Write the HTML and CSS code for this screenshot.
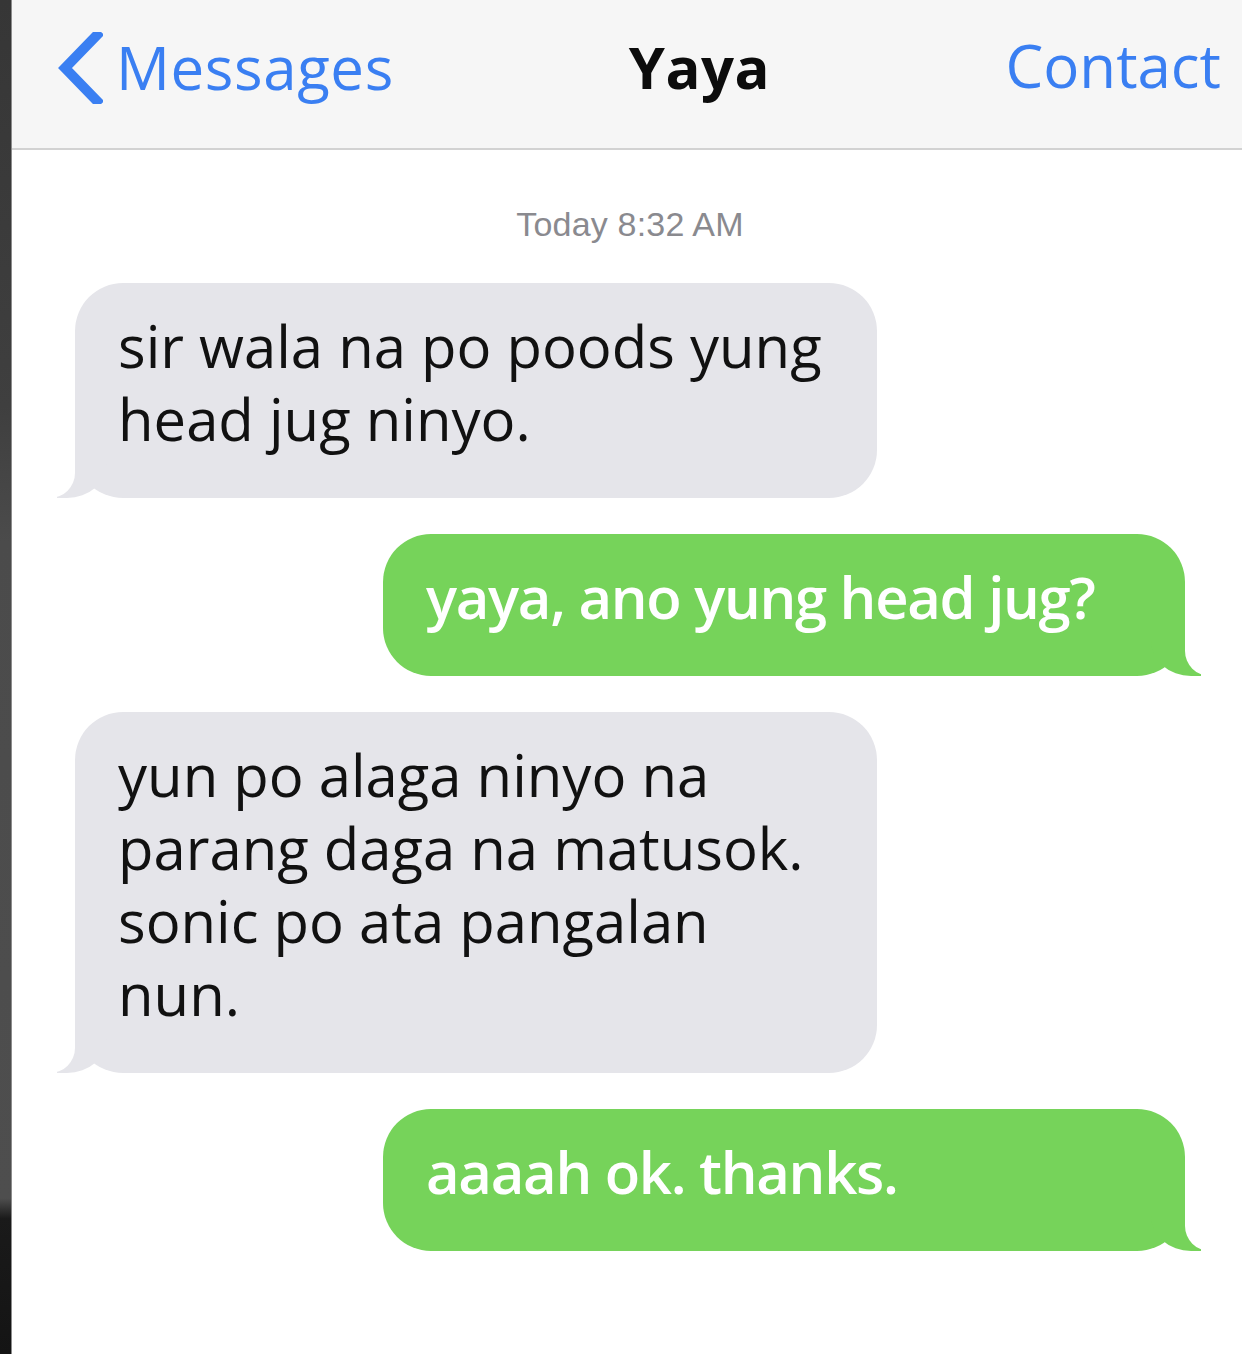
FILE: index.html
```
<!DOCTYPE html>
<html lang="tl">
<head>
<meta charset="utf-8">
<title>Yaya</title>
<link rel="stylesheet" href="styles.css">
</head>
<body>
<div class="device">
  <div class="bezel"></div>
  <div class="screen">
    <header class="navbar">
      <a class="back" href="#">
        <svg class="chevron" width="46" height="72" viewBox="0 0 46 72" aria-hidden="true">
          <polyline points="40,3 8,36 40,69" fill="none" stroke="#3a7ff2" stroke-width="10" stroke-linecap="square" stroke-linejoin="miter"/>
        </svg>
        <span>Messages</span>
      </a>
      <h1 class="title">Yaya</h1>
      <a class="contact" href="#">Contact</a>
    </header>
    <main class="thread">
      <div class="timestamp">Today 8:32 AM</div>
      <p class="bubble them">sir wala na po poods yung<br>head jug ninyo.</p>
      <p class="bubble me">yaya, ano yung head jug?</p>
      <p class="bubble them">yun po alaga ninyo na<br>parang daga na matusok.<br>sonic po ata pangalan<br>nun.</p>
      <p class="bubble me">aaaah ok. thanks.</p>
    </main>
  </div>
</div>
</body>
</html>
```
FILE: styles.css
```
* { box-sizing: border-box; }

html, body {
  margin: 0;
  padding: 0;
  background: #ffffff;
}

body {
  font-family: "Open Sans", "Noto Sans", sans-serif;
  overflow: hidden;
}

.device {
  display: flex;
  width: 1242px;
  height: 1354px;
}

.bezel {
  width: 12px;
  flex: 0 0 12px;
  background: linear-gradient(to bottom, #363636 0%, #3f3f3f 30%, #4b4b4b 40%, #4e4e4e 88.5%, #1a1a1a 90%, #141414 100%);
  border-right: 1px solid #8c8c8c;
}

.screen {
  flex: 1;
  display: flex;
  flex-direction: column;
  background: #ffffff;
  overflow: hidden;
}

.navbar {
  height: 150px;
  flex: 0 0 150px;
  display: flex;
  align-items: center;
  padding: 0 21px 14px 45px;
  background: #f6f6f6;
  border-bottom: 2px solid #d2d2d2;
}

.back {
  display: flex;
  align-items: center;
  gap: 13px;
  color: #3a7ff2;
  text-decoration: none;
  font-size: 60px;
  line-height: 1;
  letter-spacing: 0.6px;
}

.chevron {
  display: block;
  margin-top: 2px;
}

.title {
  margin: 0 0 0 235px;
  font-size: 58px;
  font-weight: 700;
  line-height: 1;
  color: #0c0c0c;
  letter-spacing: 0.5px;
}

.contact {
  margin-left: auto;
  color: #3a7ff2;
  text-decoration: none;
  font-size: 60px;
  line-height: 1;
  margin-top: -4px;
}

.thread {
  display: flex;
  flex-direction: column;
  gap: 36px;
  padding: 0 57px 0 63px;
}

.timestamp {
  align-self: center;
  margin: 57px 0 6px;
  font-family: "Liberation Sans", Arial, sans-serif;
  font-size: 34px;
  line-height: 1;
  letter-spacing: 0.2px;
  color: #8a8a8f;
}

.bubble {
  position: relative;
  width: 802px;
  margin: 0;
  padding: 26px 30px 43px 43px;
  border-radius: 48px;
  font-size: 58px;
  line-height: 73px;
}

.bubble::before,
.bubble::after {
  content: "";
  position: absolute;
  bottom: 0;
  height: 60px;
}

.them {
  align-self: flex-start;
  background: #e5e5ea;
  color: #111111;
}

.them::before {
  left: -18px;
  width: 50px;
  background: #e5e5ea;
  border-bottom-right-radius: 40px 35px;
}

.them::after {
  left: -60px;
  width: 60px;
  background: #ffffff;
  border-bottom-right-radius: 25px;
}

.me {
  align-self: flex-end;
  background: #76d35a;
  color: #ffffff;
  font-weight: 600;
  letter-spacing: -1.3px;
}

.me::before {
  right: -16px;
  width: 50px;
  background: #76d35a;
  border-bottom-left-radius: 40px 35px;
}

.me::after {
  right: -60px;
  width: 60px;
  background: #ffffff;
  border-bottom-left-radius: 25px;
}
```
